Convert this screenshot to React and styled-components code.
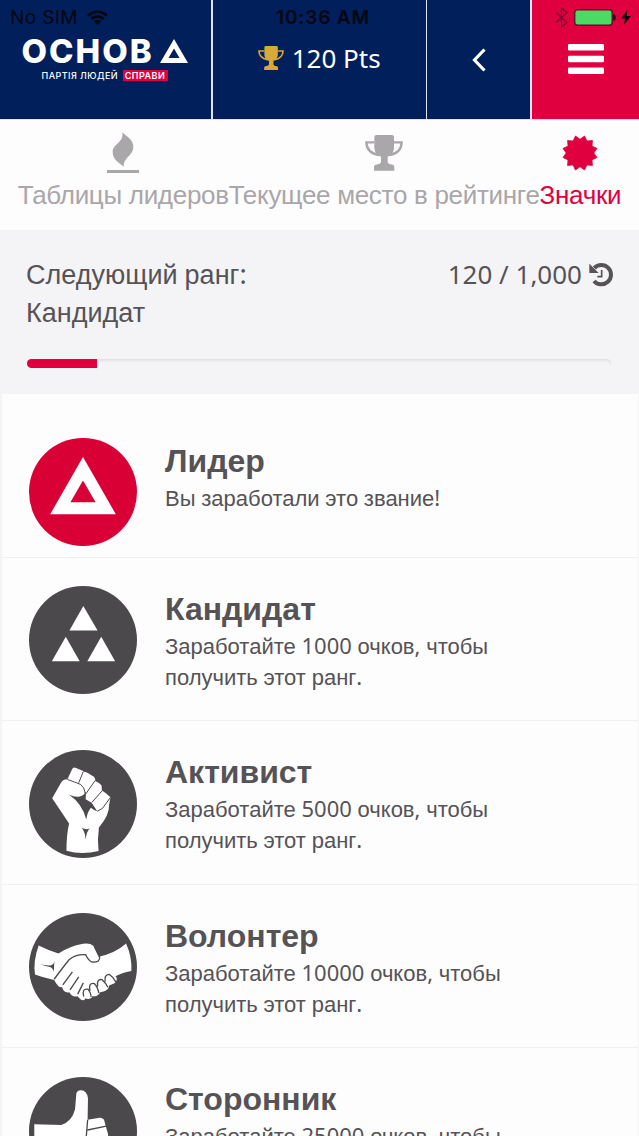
import React from 'react';
import styled, { createGlobalStyle } from 'styled-components';

const GlobalStyle = createGlobalStyle`
  * {
    box-sizing: border-box;
  }

  body {
    margin: 0;
    background: #f4f3f6;
    color: #555356;
    font-family: 'Liberation Sans', Arial, sans-serif;
  }
`;

const Screen = styled.div`
  position: relative;
  height: 1136px;
  overflow: hidden;
`;

const StatusBar = styled.div`
  position: absolute;
  top: 0;
  left: 0;
  right: 0;
  height: 35px;
  padding: 0 8px 0 10px;
  display: grid;
  grid-template-columns: 1fr auto 1fr;
  align-items: center;
  color: #020611;
  font: 400 19px/35px Inter, sans-serif;
`;

const StatusGroup = styled.div`
  display: flex;
  align-items: center;
  gap: ${({ $gap }) => $gap || 9}px;
  justify-content: ${({ $end }) => ($end ? 'flex-end' : 'flex-start')};
`;

const Carrier = styled.span`
  letter-spacing: 0.4px;
`;

const Clock = styled.span`
  font-weight: 600;
  letter-spacing: 0.85px;
  margin-left: 5px;
`;

const Header = styled.header`
  display: grid;
  grid-template-columns: 211px 213px 103px 107px;
  gap: 0 1.7px;
  height: 120px;
  padding-bottom: 1px;
  background: #dfe3f2;
`;

const HeaderCell = styled.div`
  display: flex;
  align-items: center;
  justify-content: center;
  padding-bottom: ${({ $lift }) => $lift || 0}px;
  background: ${({ $red }) => ($red ? '#e1003f' : '#001f5b')};
  color: #fff;
`;

const Logo = styled.div`
  display: flex;
  flex-direction: column;
  width: 166px;
  margin-left: -2px;
`;

const LogoName = styled.div`
  display: flex;
  align-items: center;
  justify-content: space-between;
  height: 26px;
  font: 800 33px/26px Inter, sans-serif;
  letter-spacing: 2px;
`;

const LogoSlogan = styled.div`
  display: flex;
  align-items: center;
  justify-content: space-between;
  width: 126px;
  height: 12px;
  margin: 6px 0 0 20px;
  font: 500 9px/12px Inter, sans-serif;
  letter-spacing: 0.45px;
  white-space: nowrap;
`;

const SloganTag = styled.span`
  width: 45px;
  height: 11px;
  background: #e1003f;
  font-weight: 600;
  line-height: 11px;
  text-align: center;
`;

const Points = styled.div`
  display: flex;
  align-items: center;
  gap: 8px;
  font: 400 26px/36px 'Noto Sans', sans-serif;
`;

const Tabs = styled.nav`
  display: flex;
  justify-content: center;
  height: 110px;
  background: #fefdfe;
`;

const Tab = styled.a`
  display: flex;
  flex-direction: column;
  align-items: center;
  color: ${({ $active }) => ($active ? '#e1003f' : '#a9a7aa')};
  font-size: 26px;
  line-height: 30px;
  letter-spacing: -0.3px;
  white-space: nowrap;
`;

const TabIcon = styled.div`
  display: flex;
  align-items: flex-end;
  height: 60px;
  padding-bottom: ${({ $bottom }) => $bottom || 0}px;
`;

const RankPanel = styled.section`
  height: 164px;
  padding: 27px 26px 0;
  background: #f4f3f6;
`;

const RankRow = styled.div`
  display: flex;
  justify-content: space-between;
  font-size: 27px;
  line-height: 37.5px;
`;

const Score = styled.div`
  display: flex;
  align-items: center;
  gap: 7px;
  height: 36px;
  font-family: 'Noto Sans', sans-serif;
  font-size: 26px;
`;

const Track = styled.div`
  height: 9px;
  margin: 27px 2px 0 1px;
  border-radius: 5px;
  background: #f4f3f6;
  box-shadow: inset 0 2px 2px rgba(0, 0, 0, 0.08);
  overflow: hidden;
`;

const Fill = styled.div`
  height: 100%;
  background: #e1003f;
`;

const BadgeList = styled.ul`
  list-style: none;
  margin: 0 1px 0 2px;
  padding: 0;
  background: #fefdfe;
`;

const BadgeItem = styled.li`
  display: flex;
  gap: 28px;
  height: 163.6px;
  padding: ${({ $first }) => ($first ? 44 : 28.5)}px 27px 0;
  border-bottom: 1px solid #f1eff3;
`;

const BadgeText = styled.div`
  padding-top: 3.6px;
`;

const BadgeTitle = styled.h2`
  margin: 0 0 3px;
  font-size: 32px;
  line-height: 38px;
`;

const BadgeInfo = styled.p`
  margin: 0;
  font-size: 22px;
  line-height: 31px;
`;

const Latin = styled.span`
  font-family: 'Noto Sans', sans-serif;
  line-height: 0;
`;

// digits and punctuation use the brand font, cyrillic falls back to Arial
const MixedText = ({ children }) =>
  children.split(/([0-9 ,.:!]+)/).map((part, i) =>
    i % 2 ? <Latin key={i}>{part}</Latin> : part
  );

const Trophy = ({ width, color }) => (
  <svg width={width} height={width * 0.95} viewBox="137 45 114 108" fill={color}>
    <path d="M165 51q0-6 6-6h47q6 0 6 6v34q-3 20-19 25v15q0 7 15 9 5 1 5 6v12h-61v-12q0-5 5-6 16-2 16-9v-15q-17-5-20-25z" />
    <path d="M165 67h-24q1 31 37 38M224 67h23q-1 31-36 38" fill="none" stroke={color} strokeWidth="7" />
  </svg>
);

const Flame = () => (
  <svg width="32" height="42" viewBox="320 38 96 124" fill="#a9a7aa">
    <path d="M366 38C378 50 399 60 399 82C399 108 367 115 370 141C354 129 337 118 337 98C337 72 371 70 366 38z" />
    <path d="M320 151h96v9h-96z" />
  </svg>
);

const starPoints = Array.from({ length: 24 }, (_, i) => {
  const r = i % 2 ? 17.6 : 13.8;
  const a = (i * Math.PI) / 12;
  return `${18 + r * Math.sin(a)},${18 - r * Math.cos(a)}`;
}).join(' ');

const Star = () => (
  <svg width="36" height="36" viewBox="0 0 36 36">
    <polygon points={starPoints} fill="#e1003f" stroke="#e1003f" strokeWidth="0.8" strokeLinejoin="round" />
  </svg>
);

const History = () => (
  <svg width="24" height="24" viewBox="569 98 72 72" fill="none" stroke="#555356">
    <path d="M585 113A29 29 0 1 1 584 152" strokeWidth="12" />
    <path d="M570 100v28h28z" fill="#555356" stroke="none" />
    <path d="M607 119v20h-13" strokeWidth="5" />
  </svg>
);

const Wifi = () => (
  <svg width="21" height="15" viewBox="0 0 21 15" fill="none" stroke="#020611" strokeWidth="2.6">
    <path d="M1 5.500Q10.500-2 20 5.500M4.300 9Q10.500 3.800 16.700 9" />
    <path d="M10.500 15l-3.700-3.900q3.700-2.700 7.400 0z" fill="#020611" stroke="none" />
  </svg>
);

const Bluetooth = () => (
  <svg width="14" height="21" viewBox="0 0 14 21" fill="none" stroke="#7d0630" strokeWidth="1.3">
    <path d="M1 5.500l11 10-5.500 4.500V1L12 5.500l-11 10" />
  </svg>
);

const Battery = () => (
  <svg width="42" height="17" viewBox="0 0 42 17">
    <rect x="0.7" y="0.7" width="37.5" height="15.6" rx="3" fill="#4cd964" stroke="#5c1426" strokeWidth="1.4" />
    <path d="M39 5q3 .5 3 3.500t-3 3.500z" fill="#34101c" />
  </svg>
);

const Bolt = () => (
  <svg width="10" height="15" viewBox="0 0 10 15" fill="#12040a">
    <path d="M6.500 0L0 8.500h4L2.800 15 10 6H5.600z" />
  </svg>
);

const Disc = ({ box, color = '#4b494b', children }) => {
  const [x, y] = box;
  return (
    <svg width="108" height="108" viewBox={`${x} ${y} 326 326`} fill="#fff" stroke={color} strokeWidth="0">
      <circle cx={x + 163} cy={y + 163} r="163" fill={color} />
      {children}
    </svg>
  );
};

const LeaderIcon = () => (
  <Disc box={[87, 38]} color="#d90036">
    <path fillRule="evenodd" d="M250 95l99 173H151zM250 166l-38 66h76z" />
  </Disc>
);

const CandidateIcon = () => (
  <Disc box={[87, 484]}>
    <path d="M251 544l43 74h-85zM198 637l42 74h-84zM305 637l42 74h-84z" />
  </Disc>
);

const FistIcon = () => (
  <Disc box={[87, 28]}>
    <path d="M200 332Q200 285 208 250L157 174L184 126Q190 116 203 116L217 86Q220 79 229 82L249 91Q254 96 262 96L283 109Q288 114 287 122Q295 123 306 135L307 150Q320 157 333 171L329 192Q330 225 298 262Q293 299 297 333Q245 345 200 332z" />
    <path d="M208 163Q226 171 241 168Q257 164 255 155L259 157L258 177L276 187L293 213Q283 210 274 202Q263 214 260 238Q248 190 208 163z" fill="#4b494b" />
    <path d="M203 117Q226 125 243 132Q254 140 257 158M251 93L237 127M286 121L259 160M308 151L277 186M293 213L309 204L333 171" fill="none" strokeWidth="3" />
    <path d="M246 263q12 7 24 2q-9 8-12 34q-1-23-12-36z" fill="#4b494b" />
  </Disc>
);

const HandshakeIcon = () => (
  <Disc box={[89, 520]}>
    <path d="M118 618Q150 634 178 642Q210 621 252 613Q273 610 283 619L299 652Q350 641 382 612Q401 655 398 695Q368 701 350 711Q360 719 347 732L331 739Q330 752 314 757L304 759Q296 774 281 771Q275 785 260 777Q253 789 243 779L235 771Q220 776 211 759Q195 763 189 744Q178 747 165 722Q132 716 107 706Q101 666 118 618z" />
    <path d="M165 720Q192 683 210 661Q230 644 260 646Q269 665 280 668Q305 670 302 651L287 620" fill="none" strokeWidth="4" />
    <path d="M220 698L191 737M239 713L213 752M253 731L236 765M254 772Q248 747 267 750Q278 765 276 774M273 755Q267 730 286 733Q296 743 300 762M296 742Q293 718 309 721Q321 732 327 744M319 727Q315 707 331 705Q344 714 351 728" fill="none" strokeWidth="4" />
    <path d="M123 675q25 5 33 3q9-4 10-12q-2 16-2 31q-4-12-12-14q-13-1-29-8z" fill="#4b494b" />
  </Disc>
);

const ThumbIcon = () => (
  <Disc box={[87, 110]}>
    <path d="M103 253L184 255Q217 244 226 207L230 159Q234 149 244 150Q262 151 265 174L264 239L300 233Q313 233 315 244L322 270Q330 290 323 302L326 350L290 383H103z" />
    <path d="M264 239L259 301M264 270L320 258M261 300L324 291M258 329L323 323" fill="none" strokeWidth="4" />
  </Disc>
);

const badges = [
  { title: 'Лидер', info: ['Вы заработали это звание!'], icon: <LeaderIcon /> },
  { title: 'Кандидат', info: ['Заработайте 1000 очков, чтобы', 'получить этот ранг.'], icon: <CandidateIcon /> },
  { title: 'Активист', info: ['Заработайте 5000 очков, чтобы', 'получить этот ранг.'], icon: <FistIcon /> },
  { title: 'Волонтер', info: ['Заработайте 10000 очков, чтобы', 'получить этот ранг.'], icon: <HandshakeIcon /> },
  { title: 'Сторонник', info: ['Заработайте 25000 очков, чтобы'], icon: <ThumbIcon /> },
];

function App() {
  const points = 120;
  const goal = 1000;

  return (
    <>
      <GlobalStyle />
      <Screen>
        <Header>
          <HeaderCell>
            <Logo>
              <LogoName>
                ОСНОВ
                <svg width="28" height="24" viewBox="0 0 28 24">
                  <path fillRule="evenodd" fill="#fff" d="M14 0l14 24H0zM14 9.500L8.500 19h11z" />
                </svg>
              </LogoName>
              <LogoSlogan>
                ПАРТІЯ ЛЮДЕЙ
                <SloganTag>СПРАВИ</SloganTag>
              </LogoSlogan>
            </Logo>
          </HeaderCell>
          <HeaderCell $lift={3}>
            <Points>
              <Trophy width={26} color="#d6a93a" />
              {points} Pts
            </Points>
          </HeaderCell>
          <HeaderCell>
            <svg width="14" height="24" viewBox="0 0 14 24" fill="none" stroke="#fff" strokeWidth="3.2">
              <path d="M12.500 1.500L2.500 12l10 10.500" />
            </svg>
          </HeaderCell>
          <HeaderCell $red $lift={2}>
            <svg width="36" height="30" viewBox="0 0 36 30" fill="#fff">
              <rect width="36" height="6.5" rx="1.3" />
              <rect y="11.7" width="36" height="6.5" rx="1.3" />
              <rect y="23.4" width="36" height="6.5" rx="1.3" />
            </svg>
          </HeaderCell>
        </Header>

        <Tabs>
          <Tab>
            <TabIcon $bottom={6}><Flame /></TabIcon>
            Таблицы лидеров
          </Tab>
          <Tab>
            <TabIcon $bottom={9}><Trophy width={38} color="#a9a7aa" /></TabIcon>
            Текущее место в рейтинге
          </Tab>
          <Tab $active>
            <TabIcon $bottom={9}><Star /></TabIcon>
            Значки
          </Tab>
        </Tabs>

        <RankPanel>
          <RankRow>
            <div>
              <MixedText>Следующий ранг:</MixedText>
              <br />
              Кандидат
            </div>
            <Score>
              {points} / {goal.toLocaleString('en-US')}
              <History />
            </Score>
          </RankRow>
          <Track>
            <Fill style={{ width: `${(points / goal) * 100}%` }} />
          </Track>
        </RankPanel>

        <BadgeList>
          {badges.map((badge, i) => (
            <BadgeItem key={badge.title} $first={i === 0}>
              {badge.icon}
              <BadgeText>
                <BadgeTitle>{badge.title}</BadgeTitle>
                {badge.info.map((line) => (
                  <BadgeInfo key={line}><MixedText>{line}</MixedText></BadgeInfo>
                ))}
              </BadgeText>
            </BadgeItem>
          ))}
        </BadgeList>

        <StatusBar>
          <StatusGroup>
            <Carrier>No SIM</Carrier>
            <Wifi />
          </StatusGroup>
          <Clock>10:36 AM</Clock>
          <StatusGroup $end $gap={5}>
            <Bluetooth />
            <Battery />
            <Bolt />
          </StatusGroup>
        </StatusBar>
      </Screen>
    </>
  );
}

export default App;
